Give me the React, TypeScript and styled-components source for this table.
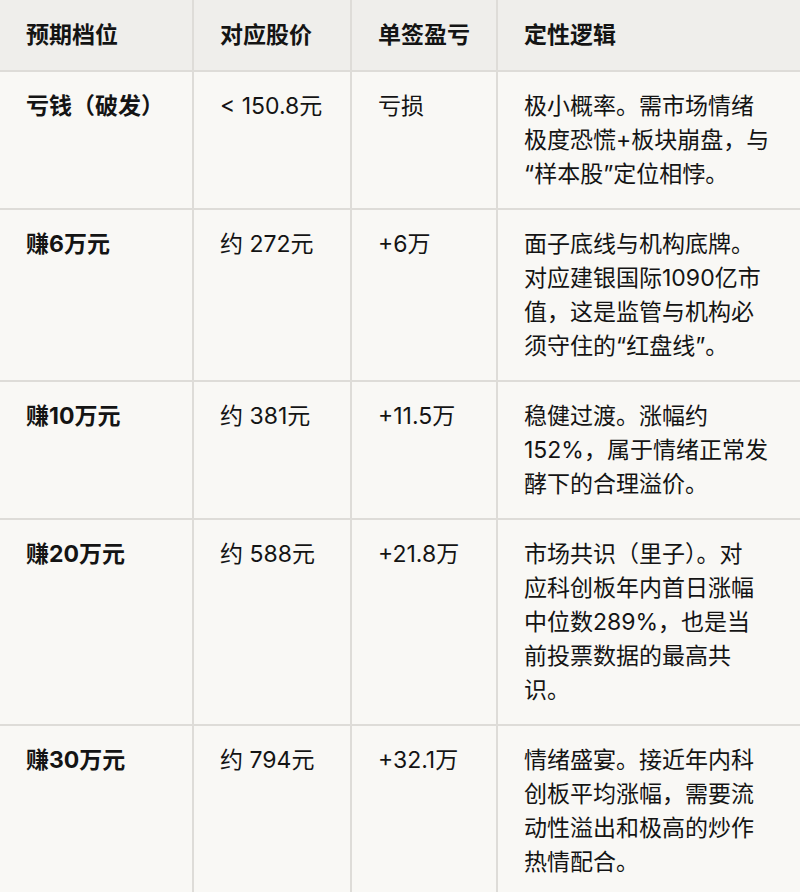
import styled, { createGlobalStyle } from "styled-components";

const GlobalStyle = createGlobalStyle`
    html, body {
        margin: 0;
        padding: 0;
        background: #f9f8f5;
    }
    body {
        font-family: Inter, "Noto Sans CJK SC", "Noto Sans", sans-serif;
        color: #141414;
    }
`;

const Table = styled.table`
    width: 800px;
    border-collapse: collapse;
    table-layout: fixed;
    background: #f9f8f5;
`;

const Col = styled.col<{ $w: number }>`
    width: ${(p) => p.$w}px;
`;

const HeadRow = styled.tr`
    background: #efeeeb;
`;

const HeadCell = styled.th`
    text-align: left;
    font-size: 23px;
    font-weight: 700;
    line-height: 34px;
    padding: 18px 20px 18px 26px;
    border: 2px solid #dedcd8;
    border-top: none;
    &:first-child { border-left: none; }
    &:last-child { border-right: none; }
`;

const Cell = styled.td<{ $bold?: boolean }>`
    vertical-align: top;
    font-size: 23px;
    font-weight: ${(p) => (p.$bold ? 700 : 400)};
    line-height: 34px;
    padding: 17px 20px 17px 26px;
    border: 2px solid #dedcd8;
    &:first-child { border-left: none; }
    &:last-child { border-right: none; }
`;

const Line = styled.span`
    display: block;
    white-space: nowrap;
`;

const rows = [
    { level: "亏钱（破发）", price: "< 150.8元", pnl: "亏损", logic: ["极小概率。需市场情绪", "极度恐慌+板块崩盘，与", "“样本股”定位相悖。"] },
    { level: "赚6万元", price: "约 272元", pnl: "+6万", logic: ["面子底线与机构底牌。", "对应建银国际1090亿市", "值，这是监管与机构必", "须守住的“红盘线”。"] },
    { level: "赚10万元", price: "约 381元", pnl: "+11.5万", logic: ["稳健过渡。涨幅约", "152%，属于情绪正常发", "酵下的合理溢价。"] },
    { level: "赚20万元", price: "约 588元", pnl: "+21.8万", logic: ["市场共识（里子）。对", "应科创板年内首日涨幅", "中位数289%，也是当", "前投票数据的最高共", "识。"] },
    { level: "赚30万元", price: "约 794元", pnl: "+32.1万", logic: ["情绪盛宴。接近年内科", "创板平均涨幅，需要流", "动性溢出和极高的炒作", "热情配合。"] },
];

export default function App() {
    return (
        <>
            <GlobalStyle />
            <Table>
                <colgroup>
                    <Col $w={193} />
                    <Col $w={158} />
                    <Col $w={146} />
                    <Col $w={303} />
                </colgroup>
                <thead>
                    <HeadRow>
                        <HeadCell>预期档位</HeadCell>
                        <HeadCell>对应股价</HeadCell>
                        <HeadCell>单签盈亏</HeadCell>
                        <HeadCell>定性逻辑</HeadCell>
                    </HeadRow>
                </thead>
                <tbody>
                    {rows.map((r) => (
                        <tr key={r.level}>
                            <Cell $bold>{r.level}</Cell>
                            <Cell>{r.price}</Cell>
                            <Cell>{r.pnl}</Cell>
                            <Cell>
                                {r.logic.map((l) => (
                                    <Line key={l}>{l}</Line>
                                ))}
                            </Cell>
                        </tr>
                    ))}
                </tbody>
            </Table>
        </>
    );
}
